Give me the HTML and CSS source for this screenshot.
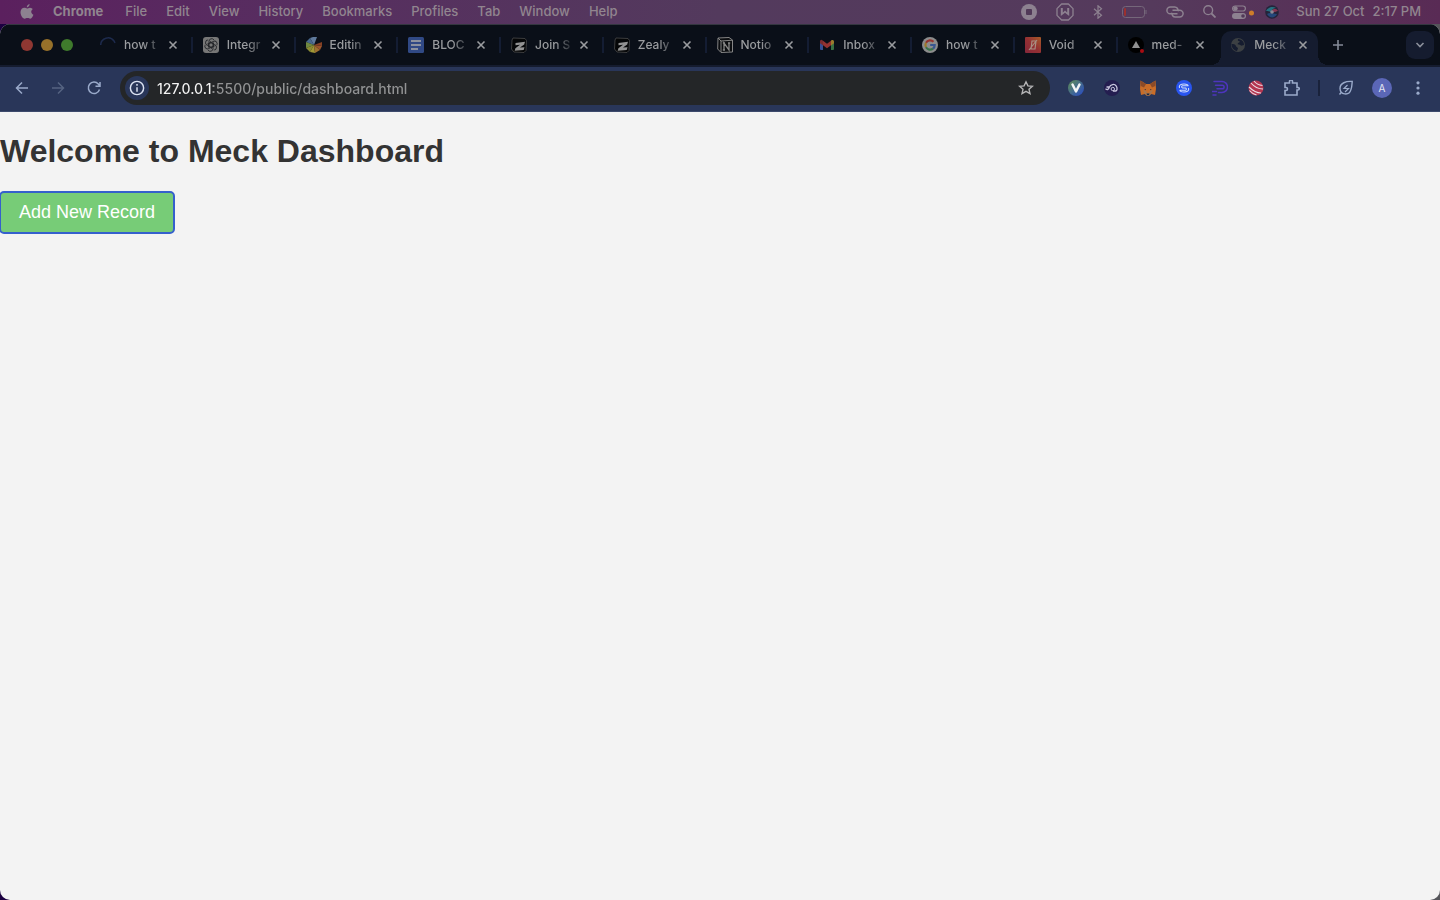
FILE: index.html
```html
<!DOCTYPE html>
<html lang="en">
<head>
    <meta charset="UTF-8">
    <meta name="viewport" content="width=device-width, initial-scale=1.0">
    <title>Meck Dashboard</title>
    <link rel="stylesheet" href="styles.css">
</head>
<body>
    <!-- Shared symbols -->
    <svg class="symbols" width="0" height="0" aria-hidden="true">
        <symbol id="close" viewBox="0 0 16 16"><path d="M4.5 4.5l7 7M11.5 4.5l-7 7" fill="none" stroke="currentColor" stroke-width="1.6"/></symbol>
        <symbol id="zealy" viewBox="0 0 16 16">
            <path d="M2 1l12 .5 1.5 2-.5 10-2 2-10-.5L.5 12 1 3z" fill="#050607" stroke="#4a4a4a" stroke-width=".8"/>
            <path d="M4.500 6L14 4.800l-.8 2.700-4.200 3 4.500-.3-.8 2.800-9 .8.700-2.500L9 7.800l-4.500.4z" fill="#929292"/>
        </symbol>
    </svg>

    <nav class="menu-bar">
        <button class="apple" aria-label="Apple menu">
            <svg width="14" height="16" viewBox="0 0 14 16"><path d="M9.600 0c.1 1.700-1.200 3.300-2.800 3.400C6.600 1.800 8 .2 9.600 0zM7.100 4.500c.7 0 1.600-.9 3-.8 1.200.1 2.100.6 2.700 1.400-2.300 1.500-1.900 4.700.6 5.700-.5 1.400-1.700 3.900-3.100 4-1 0-1.400-.7-2.800-.7s-1.800.7-2.800.7C2.700 14.900.4 11.200.5 8.100c.1-2.900 2-4.300 3.700-4.300 1.300 0 2.200.7 2.900.7z" fill="#8d8190"/></svg>
        </button>
        <button class="app-name">Chrome</button>
        <button>File</button>
        <button>Edit</button>
        <button>View</button>
        <button>History</button>
        <button>Bookmarks</button>
        <button>Profiles</button>
        <button>Tab</button>
        <button>Window</button>
        <button>Help</button>
        <div class="status">
            <svg width="16" height="16" viewBox="0 0 16 16"><circle cx="8" cy="8" r="8" fill="#8d8190"/><rect x="5" y="5" width="6" height="6" rx="1" fill="#513958"/></svg>
            <svg width="18" height="18" viewBox="0 0 18 18"><path d="M5.600 1h6.800L17 5.600v6.800L12.400 17H5.600L1 12.400V5.600z" fill="none" stroke="#8d8190" stroke-width="1.300" stroke-linejoin="round"/><path d="M4.800 5h2v4.500L9 7.500l2.200 2V5h2v8L9 9.800 4.800 13z" fill="#8d8190"/></svg>
            <svg width="10" height="14" viewBox="0 0 10 14" fill="none" stroke="#8d8190" stroke-width="1.200"><path d="M1 3.800l7.500 6.400L5 13.200V.8l3.500 3L1 10.200"/></svg>
            <svg width="25" height="12" viewBox="0 0 25 12"><rect x=".5" y=".5" width="22" height="11" rx="3" fill="none" stroke="#75677a"/><rect x="2" y="2" width="2" height="8" rx="1" fill="#9b302e"/><path d="M24 4v4" stroke="#75677a"/></svg>
            <svg width="18" height="12" viewBox="0 0 18 12" fill="none" stroke="#8d8190" stroke-width="1.500"><path d="M11.500 7.800H4.300a3.400 3.400 0 010-6.800h4.400a3.400 3.400 0 013.300 4.200M6.500 4.200h7.200a3.400 3.400 0 010 6.800H9.300A3.400 3.400 0 016 6.800"/></svg>
            <svg width="13" height="13" viewBox="0 0 13 13" fill="none" stroke="#8d8190" stroke-width="1.400"><circle cx="5.200" cy="5.200" r="4.400"/><path d="M8.500 8.500l4 4" stroke-width="1.800"/></svg>
            <svg class="control-center" width="22" height="14" viewBox="0 0 22 14"><rect x=".6" y="1" width="12.800" height="5" rx="2.500" fill="none" stroke="#8d8190" stroke-width="1.200"/><circle cx="3.500" cy="3.500" r="2.200" fill="#8d8190"/><rect y="8" width="14" height="6" rx="3" fill="#8d8190"/><circle cx="11" cy="11" r="1.800" fill="#513958"/><circle cx="19.500" cy="8" r="2.500" fill="#ce7d2a"/></svg>
            <svg width="14" height="14" viewBox="0 0 14 14"><circle cx="7" cy="7" r="6.800" fill="#25243a"/><path d="M1 6c2-4 7-5 10-3-3 0-4 2-5 4-2-1-3-1-5-1z" fill="#267080"/><path d="M6 7c2-4 5-4 7-1-2 0-3 2-6 1z" fill="#873651"/><path d="M2 9c3-2 6 0 10 0-2 4-7 5-10 0z" fill="#24477a"/><circle cx="7" cy="7" r="1.800" fill="#8a8a96"/></svg>
            <span class="clock"><span>Sun 27 Oct</span><span>2:17 PM</span></span>
        </div>
    </nav>

    <div class="window">
        <div class="tab-strip">
            <div class="lights"><i class="red"></i><i class="yellow"></i><i class="green"></i></div>
            <div class="tabs">
                <div class="tab">
                    <svg viewBox="0 0 16 16"><path d="M.7 8A7.300 7.300 0 0114 4l1 2" fill="none" stroke="#1d2a4c" stroke-width="1.500"/></svg>
                    <a href="#">how t</a><button aria-label="Close tab"><svg viewBox="0 0 16 16"><use href="#close"/></svg></button>
                </div>
                <div class="tab">
                    <svg viewBox="0 0 16 16"><rect width="16" height="16" rx="3" fill="#777"/><g fill="none" stroke="#24262a" stroke-width=".9"><path id="petal" d="M6 5.500V4.200a2.700 2.700 0 015-1.200M6 5.500v4.300l3 1.700"/><use href="#petal" transform="rotate(60 8 8)"/><use href="#petal" transform="rotate(120 8 8)"/><use href="#petal" transform="rotate(180 8 8)"/><use href="#petal" transform="rotate(240 8 8)"/><use href="#petal" transform="rotate(300 8 8)"/></g></svg>
                    <a href="#">Integr</a><button aria-label="Close tab"><svg viewBox="0 0 16 16"><use href="#close"/></svg></button>
                </div>
                <div class="tab">
                    <svg viewBox="0 0 16 16"><path d="M8 8L4 1l3-1h4z" fill="#5f7a9c"/><path d="M8 8L0 5l4-4z" fill="#48688e"/><path d="M8 8L0 5v6z" fill="#6e8740"/><path d="M8 8l-8 3 4 4z" fill="#8a8b32"/><path d="M8 8l-4 7 5 1z" fill="#a19836"/><path d="M8 8l1 8 5-3z" fill="#9d7030"/><path d="M8 8l6 5 2-4z" fill="#9a542b"/><path d="M8 8l8 1V5z" fill="#854024"/></svg>
                    <a href="#">Editin</a><button aria-label="Close tab"><svg viewBox="0 0 16 16"><use href="#close"/></svg></button>
                </div>
                <div class="tab">
                    <svg viewBox="0 0 16 16"><rect width="16" height="16" rx="1.500" fill="#304985"/><path d="M3 4h10M3 8h10M3 12h7" stroke="#8c929f" stroke-width="2"/></svg>
                    <a href="#">BLOC</a><button aria-label="Close tab"><svg viewBox="0 0 16 16"><use href="#close"/></svg></button>
                </div>
                <div class="tab">
                    <svg viewBox="0 0 16 16"><use href="#zealy"/></svg>
                    <a href="#">Join S</a><button aria-label="Close tab"><svg viewBox="0 0 16 16"><use href="#close"/></svg></button>
                </div>
                <div class="tab">
                    <svg viewBox="0 0 16 16"><use href="#zealy"/></svg>
                    <a href="#">Zealy</a><button aria-label="Close tab"><svg viewBox="0 0 16 16"><use href="#close"/></svg></button>
                </div>
                <div class="tab">
                    <svg viewBox="0 0 16 16"><path d="M1 1l11-.5L15.500 3v12L4 15.500.7 12z" fill="#0b0d10" stroke="#858585"/><path d="M1 1l3 3 11.500-.8M4 4v11" fill="none" stroke="#858585"/><path d="M7 13V6l5 7V6M5.800 6H8M11 6h2.200M5.800 13H8" fill="none" stroke="#858585" stroke-width="1.300"/></svg>
                    <a href="#">Notio</a><button aria-label="Close tab"><svg viewBox="0 0 16 16"><use href="#close"/></svg></button>
                </div>
                <div class="tab">
                    <svg viewBox="0 0 16 16"><path d="M1 4l3 2v7H2a1 1 0 01-1-1z" fill="#354e93"/><path d="M15 4l-3 2v7h2a1 1 0 001-1z" fill="#397044"/><path d="M12 3.500l1-.5q2-.5 2 1.500v1.800l-3 2.200z" fill="#9b7b2c"/><path d="M4 3.700l4 3 4-3v4.500l-4 3-4-3z" fill="#943231"/><path d="M1 6.300V4.500Q1 2.300 3 3l1 .7v4.500z" fill="#792c30"/></svg>
                    <a href="#">Inbox</a><button aria-label="Close tab"><svg viewBox="0 0 16 16"><use href="#close"/></svg></button>
                </div>
                <div class="tab">
                    <svg viewBox="0 0 16 16" fill="none" stroke-width="2.200"><circle cx="8" cy="8" r="8" fill="#8c8c8c"/><path d="M11.500 4.800A4.700 4.700 0 004 5.700" stroke="#96352f"/><path d="M4 5.700a4.700 4.700 0 000 4.600" stroke="#9b782a"/><path d="M4 10.300a4.700 4.700 0 007 1.300" stroke="#39734a"/><path d="M11 11.600A4.500 4.500 0 0012.700 8H8.200" stroke="#385690"/></svg>
                    <a href="#">how t</a><button aria-label="Close tab"><svg viewBox="0 0 16 16"><use href="#close"/></svg></button>
                </div>
                <div class="tab">
                    <svg viewBox="0 0 16 16"><defs><linearGradient id="void" x1="1" y1="0" x2="0" y2="1"><stop stop-color="#a75c28"/><stop offset=".5" stop-color="#943033"/><stop offset="1" stop-color="#84273a"/></linearGradient></defs><rect width="16" height="16" rx="1" fill="url(#void)"/><path d="M6 12l1-8h4l-1 8zM4 13l8-10" fill="none" stroke="#a98f83" stroke-width="1.200"/></svg>
                    <a href="#">Void</a><button aria-label="Close tab"><svg viewBox="0 0 16 16"><use href="#close"/></svg></button>
                </div>
                <div class="tab">
                    <svg viewBox="0 0 16 16"><circle cx="8" cy="8" r="8" fill="#000"/><path d="M8 4l4 7H4z" fill="#909090"/><circle cx="14" cy="14" r="2" fill="#a90c12"/></svg>
                    <a href="#">med-</a><button aria-label="Close tab"><svg viewBox="0 0 16 16"><use href="#close"/></svg></button>
                </div>
                <div class="tab active">
                    <svg viewBox="0 0 16 16"><circle cx="8" cy="8" r="7" fill="#3c4043"/><path d="M1.500 7c2 0 4 .3 4.500 2 0 1.300 2 1 2 2.500L7 14c-3-.5-5.500-3-5.500-7zM8 2c-.5 1.800.3 2 1.700 2.200 0 2-2 1.300-2 3 1.500.3 3 .3 3.300 1.600l3-.8c.2-3-2-5.700-6-6z" fill="#151c2f"/></svg>
                    <a href="#">Meck</a><button aria-label="Close tab"><svg viewBox="0 0 16 16"><use href="#close"/></svg></button>
                </div>
            </div>
            <button class="new-tab" aria-label="New tab"><svg width="12" height="12" viewBox="0 0 12 12"><path d="M6 1v10M1 6h10" stroke="#858b98" stroke-width="1.600"/></svg></button>
            <button class="tab-search" aria-label="Search tabs"><svg width="10" height="6" viewBox="0 0 10 6"><path d="M1.500 1L5 4.500 8.500 1" fill="none" stroke="#8c909b" stroke-width="1.600"/></svg></button>
        </div>

        <div class="toolbar">
            <div class="history-buttons">
                <button aria-label="Back"><svg viewBox="0 0 16 16"><path d="M14 8H2.500M8 2.500L2.500 8 8 13.500" fill="none" stroke="#9aaaca" stroke-width="1.500"/></svg></button>
                <button aria-label="Forward"><svg viewBox="0 0 16 16"><path d="M2 8h11.500M8 2.500L13.500 8 8 13.500" fill="none" stroke="#556381" stroke-width="1.500"/></svg></button>
                <button aria-label="Reload"><svg viewBox="0 0 16 16"><path d="M13.500 9.500A5.700 5.700 0 1112.300 4L14 6M14 2v4.300H9.500" fill="none" stroke="#9aaaca" stroke-width="1.500"/></svg></button>
            </div>
            <div class="omnibox">
                <button class="site-info" aria-label="View site information"><svg width="14" height="14" viewBox="0 0 14 14" fill="none" stroke="#dbe2f2" stroke-width="1.300"><circle cx="7" cy="7" r="5.800"/><path d="M7 6.300v4M7 3.500v1.500"/></svg></button>
                <input type="text" class="url" aria-label="Address" value="127.0.0.1:5500/public/dashboard.html">
                <button class="star" aria-label="Bookmark this tab"><svg width="16" height="16" viewBox="0 0 16 16"><path d="M8 1.800l1.900 4.100 4.500.4-3.400 3 1 4.400L8 11.400l-4 2.300 1-4.400-3.400-3 4.500-.4z" fill="none" stroke="#b4b4b5" stroke-width="1.400"/></svg></button>
            </div>
            <div class="extensions">
                <button aria-label="Vault"><svg viewBox="0 0 16 16"><defs><linearGradient id="vault" x1="0" y1="0" x2="1" y2="1"><stop offset=".2" stop-color="#568268"/><stop offset=".9" stop-color="#2c4fbd"/></linearGradient></defs><circle cx="8" cy="8" r="8" fill="url(#vault)"/><path d="M4.500 4.500l3.500 7 3.500-7" fill="none" stroke="#f1f4f4" stroke-width="2.500" stroke-linecap="round" stroke-linejoin="round"/></svg></button>
                <button aria-label="Wallet"><svg viewBox="0 0 16 16"><circle cx="8" cy="8" r="8" fill="#241e50"/><path d="M1.500 8.800c2 1.500 3 .5 3.700-1.300C6.500 4 10.500 3.500 12.300 6.200c1.200 2 1 4.800-.8 4.800H9M2.500 7h2.800" fill="none" stroke="#c7c5dd" stroke-width="1.300"/><circle cx="8.800" cy="9" r="1.700" fill="none" stroke="#c7c5dd"/></svg></button>
                <button aria-label="Fox wallet"><svg viewBox="0 0 16 16"><path d="M.5.5L6 4h4L15.500.5 16 9l-1 6-4-1-1.500 1.500h-3L5 14l-4 1-1-6z" fill="#c96d28"/><path d="M.5.500L6 4 4 7.500.8 6zM15.500.500L10 4l2 3.500L15.200 6z" fill="#8b4b28"/><path d="M3 10l3 1 1 2h2l1-2 3-1-2 4-1.500 1.500h-3L5 14z" fill="#a7774f"/><path d="M6.500 13.500h3l-.5 1.500H7z" fill="#222a3b"/><path d="M4 9l2 .3v1zM12 9l-2 .3v1z" fill="#283044"/></svg></button>
                <button aria-label="Exchange"><svg viewBox="0 0 16 16"><circle cx="8" cy="8" r="8" fill="#2955f0"/><path d="M12 5.700H6.500a1.200 1.200 0 000 2.300h3a1.200 1.200 0 010 2.300H4M3.500 8C2.500 5 5 4 8 4s4.500 1 4 2M12.500 8c1 3-1.500 4-4.500 4s-4.500-1-4-2" fill="none" stroke="#d0ddfa" stroke-width="1.100"/></svg></button>
                <button aria-label="Portfolio"><svg viewBox="0 0 16 16"><path d="M2 1.500h8a5.500 5.500 0 010 11H6.500M3.500 5.200h6.800a1.800 1.800 0 010 3.600H5M0 11.500h4.500M1 15h3" fill="none" stroke="#4d35bd" stroke-width="1.500" stroke-linecap="round"/></svg></button>
                <button aria-label="Stripes"><svg viewBox="0 0 16 16"><circle cx="8" cy="8" r="7.500" fill="#b43650"/><path d="M3 3q5 6 12 6M1 7q6 6 12 6M6 1q3 4 8.500 4.500M1.500 10.500q3 3.500 7 4.500" fill="none" stroke="#ebdde6" stroke-width="1.100"/></svg></button>
                <button aria-label="Extensions"><svg viewBox="0 0 16 16"><path d="M1 3h4.500V1.500a1.500 1.500 0 013 0V3H13v4.500h1a1.200 1.200 0 010 2.500h-1v5H1v-4.500h1a1.500 1.500 0 000-3H1z" fill="none" stroke="#9aaaca" stroke-width="1.600"/></svg></button>
            </div>
            <span class="divider"></span>
            <div class="profile">
                <button aria-label="Energy saver"><svg viewBox="0 0 16 16" fill="none" stroke="#9aaaca" stroke-width="1.400"><path d="M14.200 1.500C8 1 2 3 2 8.500a5.500 5.500 0 0010.800 1.400C14 7 14 5 14.200 1.500zM3.500 12l-2 2.500"/><path d="M9.500 5L6 8.500h4.500L7 12" stroke-width="1.200"/></svg></button>
                <button class="avatar">A</button>
                <button aria-label="Menu"><svg viewBox="0 0 16 16" fill="#9aaaca"><circle cx="8" cy="2.800" r="1.600"/><circle cx="8" cy="8" r="1.600"/><circle cx="8" cy="13.200" r="1.600"/></svg></button>
            </div>
        </div>

        <main class="page">
            <h1>Welcome to Meck Dashboard</h1>
            <button class="add-record">Add New Record</button>
        </main>
    </div>
</body>
</html>
```
FILE: styles.css
```css
* {
    box-sizing: border-box;
}

body {
    font-family: Inter, 'Liberation Sans', sans-serif;
    margin: 0;
    min-height: 100vh;
    display: flex;
    flex-direction: column;
    background: linear-gradient(90deg, #1b0040, #1b0040 50%, #55555a);
}

button {
    font: inherit;
    color: inherit;
    background: none;
    border: none;
    padding: 0;
    display: flex;
    align-items: center;
    justify-content: center;
    cursor: pointer;
}

svg {
    display: block;
    flex: none;
}

.symbols {
    position: absolute;
}

/* macOS menu bar */
.menu-bar {
    height: 24px;
    padding: 0 19px 1px 20px;
    display: flex;
    align-items: center;
    gap: 19px;
    background: linear-gradient(90deg, #5b205e, #582b60 15%, #533a5d 50%, #553a5c 80%, #592b55);
    color: #91858f;
    font-size: 13px;
    line-height: 15px;
    font-weight: 500;
    white-space: nowrap;
}

.app-name {
    font-weight: 700;
    margin-right: 3px;
}

.status {
    margin-left: auto;
    display: flex;
    align-items: center;
    gap: 19px;
}

.control-center {
    margin: 0 -8px 0 -3px;
}

.clock {
    display: flex;
    gap: 8px;
    margin-left: -2px;
}

/* Browser window */
.window {
    flex: 1;
    display: flex;
    flex-direction: column;
    overflow: hidden;
    border-radius: 10px;
    background-color: #f3f3f3;
}

.tab-strip {
    height: 43px;
    display: flex;
    align-items: center;
    background-color: #0a0f18;
    border-top: 1px solid #343740;
    border-bottom: 2px solid #151c2f;
}

.lights {
    width: 89px;
    padding-left: 21px;
    display: flex;
    gap: 8px;
    flex: none;
}

.lights i {
    width: 12px;
    height: 12px;
    border-radius: 50%;
}

.red {
    background-color: #8f3732;
}

.yellow {
    background-color: #97712a;
}

.green {
    background-color: #3f7a2c;
}

.tabs {
    flex: 1;
    display: flex;
    align-self: stretch;
    min-width: 0;
}

.tab {
    flex: 1 1 0;
    min-width: 0;
    padding: 0 11px 1px;
    display: flex;
    align-items: center;
    position: relative;
    color: #9a9c9f;
    font-size: 12px;
    line-height: 16px;
}

.tab svg {
    width: 16px;
    height: 16px;
}

.tab a {
    flex: 1;
    min-width: 0;
    margin-left: 8px;
    white-space: nowrap;
    color: inherit;
    text-decoration: none;
    font-weight: 500;
    mask-image: linear-gradient(90deg, #000 20px, transparent 40px);
}

.tab button {
    margin-left: 5px;
}

/* Separator between tabs */
.tab::after {
    content: "";
    position: absolute;
    right: -1px;
    top: 12px;
    width: 2px;
    height: 16px;
    background-color: #141d33;
}

.tab:nth-child(11)::after {
    display: none;
}

.active::before {
    content: "";
    position: absolute;
    inset: 6px 4px 0 2px;
    border-radius: 10px 10px 0 0;
    background-color: #151c2f;
}

/* Curved feet of the active tab */
.active::after {
    top: auto;
    bottom: 0;
    left: -8px;
    right: -6px;
    width: auto;
    height: 10px;
    background:
        radial-gradient(circle at 0 0, transparent 10px, #151c2f 10px) left / 10px 10px no-repeat,
        radial-gradient(circle at 100% 0, transparent 10px, #151c2f 10px) right / 10px 10px no-repeat;
}

.active > * {
    position: relative;
}

.new-tab {
    width: 32px;
    height: 28px;
}

.tab-search {
    width: 28px;
    height: 28px;
    margin: 0 6px 0 52px;
    border-radius: 9px;
    background-color: #151c2f;
}

.toolbar {
    height: 45px;
    padding: 0 14px 2px;
    display: flex;
    align-items: center;
    background-color: #293659;
    border-bottom: 1px solid #3d4a6c;
}

.toolbar svg {
    width: 16px;
    height: 16px;
}

.history-buttons,
.extensions,
.profile {
    display: flex;
    align-items: center;
    gap: 20px;
}

.omnibox {
    flex: 1;
    height: 34px;
    margin: 0 18px;
    padding: 0 16px 0 5px;
    display: flex;
    align-items: center;
    gap: 8px;
    border-radius: 17px;
    background-color: #242628;
}

.site-info {
    width: 24px;
    height: 24px;
    border-radius: 50%;
    background-color: #293659;
}

/* Host is brighter than the rest of the address */
.url {
    flex: 1;
    min-width: 0;
    padding: 0;
    border: none;
    outline: none;
    font-family: Inter, sans-serif;
    font-size: 14px;
    font-weight: 500;
    color: #929394;
    background: linear-gradient(90deg, #f4f4f4 56px, #929394 56px);
    background-clip: text;
    -webkit-text-fill-color: transparent;
}

.divider {
    width: 2px;
    height: 16px;
    margin: 0 18px;
    background-color: #19223b;
}

.profile .avatar {
    width: 20px;
    height: 20px;
    margin: 0 -2px;
    border-radius: 50%;
    background-color: #5b67b7;
    color: #e5e7f3;
    font-size: 10px;
}

/* Dashboard page */
.page {
    font-family: Arial, 'Liberation Sans', sans-serif;
    color: #333;
}

.page h1 {
    font-size: 32px;
    line-height: 38px;
    margin: 20px 0 22px;
}

.add-record {
    background-color: #77cc77;
    color: #fff;
    font-size: 18px;
    line-height: 21px;
    padding: 10px 19px;
    border-radius: 4px;
    outline: 2px solid #3560cc;
    outline-offset: -1px;
}
```
